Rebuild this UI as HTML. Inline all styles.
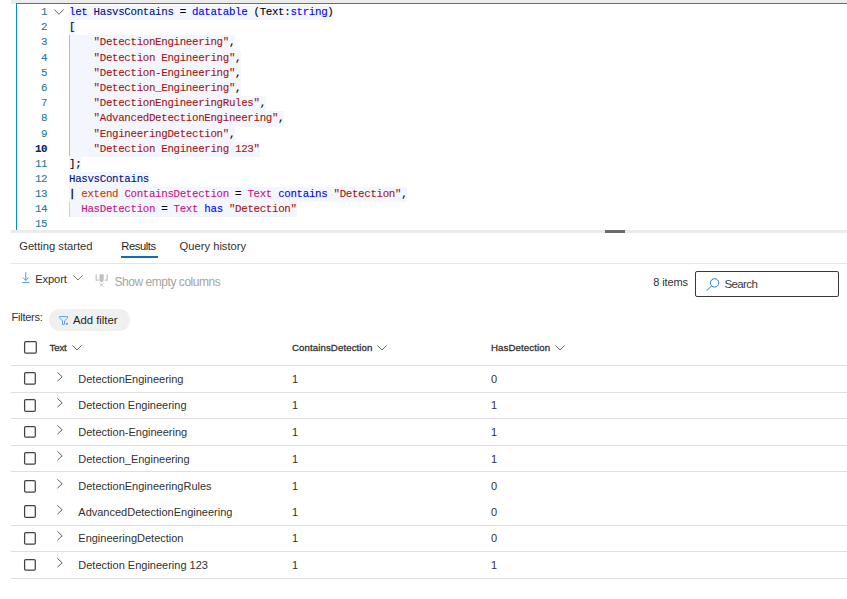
<!DOCTYPE html>
<html lang="en">
<head>
<meta charset="utf-8">
<title>Query results</title>
<style>
html,body{margin:0;padding:0;background:#fff;}
body{width:847px;height:599px;position:relative;overflow:hidden;font-family:"Liberation Sans",sans-serif;color:#323130;}
.abs{position:absolute;}
#topstrip{left:11px;top:0;width:836px;height:3.5px;background:#ececec;}
#edtop{left:16px;top:3px;width:831px;height:1.2px;background:#0986e8;}
#edleft{left:16px;top:3px;width:1.2px;height:227px;background:#0986e8;}
#splitter{left:11px;top:230px;width:836px;height:3px;background:#edebe9;}
#handle{left:605px;top:230px;width:20px;height:3px;background:#6b6a68;}
.ln{position:absolute;left:0;width:47.2px;text-align:right;font-family:"Liberation Mono",monospace;font-size:10.8px;letter-spacing:-0.33px;color:#237893;height:15.15px;line-height:15.15px;white-space:pre;-webkit-text-stroke:0.1px;}
.ln.cur{color:#0b216f;font-weight:bold;}
.cl{position:absolute;left:69px;font-family:"Liberation Mono",monospace;font-size:10.8px;letter-spacing:-0.33px;color:#000;height:15.15px;line-height:15.15px;white-space:pre;-webkit-text-stroke:0.1px;}
.cl span.h{background:#f3f7fd;display:inline-block;height:15.15px;}
.k{color:#0000ff;}
.s{color:#a31515;}
.c{color:#c71585;}
.q{color:#ce3600;}
.v{color:#001188;}
#guide1{left:69px;top:35px;width:1px;height:121px;background:#b9b9b9;}
#guide2{left:69px;top:201.6px;width:1px;height:15px;background:#d3d3d3;}
.tab{position:absolute;top:239px;font-size:11.2px;line-height:14px;color:#323130;white-space:nowrap;}
#tabline{left:121px;top:256.3px;width:36.8px;height:1.8px;background:#0f6cbd;}
#sep{left:11px;top:263px;width:836px;height:1px;background:#e6e6e6;}
.t{position:absolute;white-space:nowrap;line-height:14px;}
#pill{left:49px;top:309px;width:81px;height:22px;border-radius:11px;background:#f0f0f0;}
#search{left:695px;top:271px;width:142px;height:24px;border:1px solid #3b3a39;border-radius:2px;background:#fff;}
.row{position:absolute;left:11px;width:836px;height:1px;background:#e1dfdd;}
.cb{position:absolute;left:24px;width:10.4px;height:10.4px;border:1.2px solid #3b3a39;border-radius:2px;background:#fff;}
.cell{position:absolute;font-size:11px;line-height:14px;color:#323130;white-space:nowrap;}
.hd{position:absolute;font-size:9.7px;line-height:14px;color:#323130;white-space:nowrap;-webkit-text-stroke:0.28px #323130;letter-spacing:0.08px;}
svg{position:absolute;overflow:visible;}
.p{-webkit-text-stroke:0.35px #000;}

</style>
</head>
<body>
<div class="abs" id="topstrip"></div>
<div class="abs" id="edtop"></div>
<div class="abs" id="edleft"></div>
<div class="ln" style="top:4.70px">1</div>
<div class="cl" style="top:4.70px"><span class="h" style="height:15px"><span class="k">let</span> <span class="v">HasvsContains</span> = <span class="k">datatable</span> (Text:<span class="k">string</span>)</span></div>
<div class="ln" style="top:19.70px">2</div>
<div class="cl" style="top:19.70px"><span class="h" style="height:15px">[</span></div>
<div class="ln" style="top:34.70px">3</div>
<div class="cl" style="top:34.70px"><span class="h" style="height:16px">    <span class="s">&quot;DetectionEngineering&quot;</span>,</span></div>
<div class="ln" style="top:50.70px">4</div>
<div class="cl" style="top:50.70px"><span class="h" style="height:15px">    <span class="s">&quot;Detection Engineering&quot;</span>,</span></div>
<div class="ln" style="top:65.70px">5</div>
<div class="cl" style="top:65.70px"><span class="h" style="height:15px">    <span class="s">&quot;Detection-Engineering&quot;</span>,</span></div>
<div class="ln" style="top:80.70px">6</div>
<div class="cl" style="top:80.70px"><span class="h" style="height:15px">    <span class="s">&quot;Detection_Engineering&quot;</span>,</span></div>
<div class="ln" style="top:95.70px">7</div>
<div class="cl" style="top:95.70px"><span class="h" style="height:15px">    <span class="s">&quot;DetectionEngineeringRules&quot;</span>,</span></div>
<div class="ln" style="top:110.70px">8</div>
<div class="cl" style="top:110.70px"><span class="h" style="height:16px">    <span class="s">&quot;AdvancedDetectionEngineering&quot;</span>,</span></div>
<div class="ln" style="top:126.70px">9</div>
<div class="cl" style="top:126.70px"><span class="h" style="height:15px">    <span class="s">&quot;EngineeringDetection&quot;</span>,</span></div>
<div class="ln cur" style="top:141.70px">10</div>
<div class="cl" style="top:141.70px"><span class="h" style="height:15px">    <span class="s">&quot;Detection Engineering 123&quot;</span></span></div>
<div class="ln" style="top:156.70px">11</div>
<div class="cl" style="top:156.70px"><span class="h" style="height:15px">];</span></div>
<div class="ln" style="top:171.70px">12</div>
<div class="cl" style="top:171.70px"><span class="h" style="height:15px"><span class="v">HasvsContains</span></span></div>
<div class="ln" style="top:186.70px">13</div>
<div class="cl" style="top:186.70px"><span class="h" style="height:15px"><span class="p">|</span> <span class="q">extend</span> <span class="c">ContainsDetection</span> = <span class="c">Text</span> <span class="k">contains</span> <span class="s">&quot;Detection&quot;</span>,</span></div>
<div class="ln" style="top:201.70px">14</div>
<div class="cl" style="top:201.70px"><span class="h" style="height:15px">  <span class="c">HasDetection</span> = <span class="c">Text</span> <span class="k">has</span> <span class="s">&quot;Detection&quot;</span></span></div>
<div class="ln" style="top:216.70px">15</div>
<div class="abs" id="guide1"></div>
<div class="abs" id="guide2"></div>
<div class="abs" id="splitter"></div>
<div class="abs" id="handle"></div>
<svg id="fold" style="left:54.2px;top:8.8px" width="10" height="6" viewBox="0 0 10 6"><path d="M0.4 0.5 L5 5.3 L9.6 0.5" fill="none" stroke="#5a5a5a" stroke-width="0.95"/></svg>
<div class="t" id="tab1" style="left:19.2px;top:239px;font-size:11.2px">Getting started</div>
<div class="t" id="tab2" style="left:121.3px;top:239px;font-size:11.2px;letter-spacing:-0.42px;color:#201f1e">Results</div>
<div class="t" id="tab3" style="left:179.6px;top:239px;font-size:11.2px">Query history</div>
<div class="abs" id="tabline"></div>
<div class="abs" id="sep"></div>
<svg id="exp" style="left:22px;top:272px" width="8" height="12" viewBox="0 0 8 12"><path d="M3.75 0.2 V8.4 M1 5.6 L3.75 8.5 L6.5 5.6 M0.2 10.5 H7.3" fill="none" stroke="#3a8ee0" stroke-width="0.9"/></svg>
<div class="t" id="export" style="left:35.2px;top:272px;font-size:11.2px;letter-spacing:-0.13px">Export</div>
<svg id="expchev" style="left:73.3px;top:275.2px" width="10" height="6" viewBox="0 0 10 6"><path d="M0.4 0.4 L5 5 L9.6 0.4" fill="none" stroke="#605e5c" stroke-width="0.85"/></svg>
<svg id="colicon" style="left:95.2px;top:274px" width="13" height="13" viewBox="0 0 13 13"><path d="M1.2 0.2 V6.1 H3.8 M12.2 0.2 V6.1 H9.8" fill="none" stroke="#c6c4c2" stroke-width="1.2"/><path d="M4.5 0.2 H8.65 V7 L6.57 8.4 L4.5 7 Z" fill="#bfbfbf"/><path d="M4.6 9.3 L8.6 12.6 M8.6 9.3 L4.6 12.6" fill="none" stroke="#c0bebc" stroke-width="0.9"/></svg>
<div class="t" id="showempty" style="left:114.5px;top:275px;font-size:12px;letter-spacing:-0.455px;color:#a6a4a2">Show empty columns</div>
<div class="t" id="items" style="left:653.2px;top:275px;font-size:11px;letter-spacing:-0.1px">8 items</div>
<div class="abs" id="search"></div>
<svg id="sicon" style="left:706px;top:278px" width="14" height="13" viewBox="0 0 14 13"><circle cx="8.6" cy="4.9" r="4.2" fill="none" stroke="#2b7fd6" stroke-width="1"/><path d="M5.6 8 L0.5 12.7" fill="none" stroke="#2b7fd6" stroke-width="1"/></svg>
<div class="t" id="searchtxt" style="left:724.5px;top:277px;font-size:11.5px;letter-spacing:-0.62px;color:#3b3a39">Search</div>
<div class="t" id="filters" style="left:11.5px;top:310px;font-size:11px;letter-spacing:-0.24px">Filters:</div>
<div class="abs" id="pill"></div>
<svg id="ficon" style="left:58px;top:316px" width="11" height="9" viewBox="0 0 11 9"><path d="M1.4 0.6 H9.5 V2.1 L6.5 4.9 V8.35 H4.5 V4.9 L1.4 1.6 Z" fill="none" stroke="#3a91de" stroke-width="0.8" stroke-linejoin="round"/><rect x="8.05" y="6.95" width="1.8" height="1.8" fill="#4a9ce2"/></svg>
<div class="t" id="addfilter" style="left:72.9px;top:313px;font-size:11.3px;color:#201f1e">Add filter</div>
<svg class="cbx" style="left:24px;top:341px" width="12.9" height="12.7" viewBox="0 0 12.9 12.7"><rect x="0.6" y="0.6" width="11.70" height="11.50" rx="1.15" ry="1.15" fill="#fff" stroke="#444240" stroke-width="1.25"/></svg>
<div class="hd" id="h1" style="left:49.5px;top:341px;letter-spacing:-0.15px">Text</div>
<div class="hd" id="h2" style="left:292px;top:341px">ContainsDetection</div>
<div class="hd" id="h3" style="left:491px;top:341px">HasDetection</div>
<svg id="hc1" style="left:72.3px;top:344.5px" width="10" height="6" viewBox="0 0 10 6"><path d="M0.4 0.4 L5 5 L9.6 0.4" fill="none" stroke="#605e5c" stroke-width="0.95"/></svg>
<svg id="hc2" style="left:377px;top:344.5px" width="10" height="6" viewBox="0 0 10 6"><path d="M0.4 0.4 L5 5 L9.6 0.4" fill="none" stroke="#605e5c" stroke-width="0.95"/></svg>
<svg id="hc3" style="left:554.5px;top:344.5px" width="10" height="6" viewBox="0 0 10 6"><path d="M0.4 0.4 L5 5 L9.6 0.4" fill="none" stroke="#605e5c" stroke-width="0.95"/></svg>
<div class="row" style="top:365px"></div>
<div class="row" style="top:392px"></div>
<div class="row" style="top:418.3px"></div>
<div class="row" style="top:445px"></div>
<div class="row" style="top:471.4px"></div>
<div class="row" style="top:525px"></div>
<div class="row" style="top:551px"></div>
<div class="row" style="top:578.2px"></div>
<svg class="cbx" style="left:24px;top:372px" width="11.9" height="12.8" viewBox="0 0 11.9 12.8"><rect x="0.6" y="0.6" width="10.70" height="11.60" rx="1.15" ry="1.15" fill="#fff" stroke="#444240" stroke-width="1.25"/></svg>
<svg class="rc" style="left:56.5px;top:372.2px" width="6" height="10" viewBox="0 0 6 10"><path d="M0.4 0.4 L5.2 4.8 L0.4 9.2" fill="none" stroke="#605e5c" stroke-width="1"/></svg>
<div class="cell" id="r0a" style="left:78.3px;top:371.5px">DetectionEngineering</div>
<div class="cell" id="r0b" style="left:292px;top:371.5px">1</div>
<div class="cell" id="r0c" style="left:491px;top:371.5px">0</div>
<svg class="cbx" style="left:24px;top:399px" width="11.9" height="12.9" viewBox="0 0 11.9 12.9"><rect x="0.6" y="0.6" width="10.70" height="11.70" rx="1.15" ry="1.15" fill="#fff" stroke="#444240" stroke-width="1.25"/></svg>
<svg class="rc" style="left:56.5px;top:398.2px" width="6" height="10" viewBox="0 0 6 10"><path d="M0.4 0.4 L5.2 4.8 L0.4 9.2" fill="none" stroke="#605e5c" stroke-width="1"/></svg>
<div class="cell" id="r1a" style="left:78.3px;top:397.5px">Detection Engineering</div>
<div class="cell" id="r1b" style="left:292px;top:397.5px">1</div>
<div class="cell" id="r1c" style="left:491px;top:397.5px">1</div>
<svg class="cbx" style="left:24px;top:426px" width="11.9" height="11.8" viewBox="0 0 11.9 11.8"><rect x="0.6" y="0.6" width="10.70" height="10.60" rx="1.15" ry="1.15" fill="#fff" stroke="#444240" stroke-width="1.25"/></svg>
<svg class="rc" style="left:56.5px;top:425.2px" width="6" height="10" viewBox="0 0 6 10"><path d="M0.4 0.4 L5.2 4.8 L0.4 9.2" fill="none" stroke="#605e5c" stroke-width="1"/></svg>
<div class="cell" id="r2a" style="left:78.3px;top:424.5px">Detection-Engineering</div>
<div class="cell" id="r2b" style="left:292px;top:424.5px">1</div>
<div class="cell" id="r2c" style="left:491px;top:424.5px">1</div>
<svg class="cbx" style="left:24px;top:452px" width="11.9" height="12.8" viewBox="0 0 11.9 12.8"><rect x="0.6" y="0.6" width="10.70" height="11.60" rx="1.15" ry="1.15" fill="#fff" stroke="#444240" stroke-width="1.25"/></svg>
<svg class="rc" style="left:56.5px;top:451.2px" width="6" height="10" viewBox="0 0 6 10"><path d="M0.4 0.4 L5.2 4.8 L0.4 9.2" fill="none" stroke="#605e5c" stroke-width="1"/></svg>
<div class="cell" id="r3a" style="left:78.3px;top:451.5px">Detection_Engineering</div>
<div class="cell" id="r3b" style="left:292px;top:451.5px">1</div>
<div class="cell" id="r3c" style="left:491px;top:451.5px">1</div>
<svg class="cbx" style="left:24px;top:480px" width="11.9" height="12.8" viewBox="0 0 11.9 12.8"><rect x="0.6" y="0.6" width="10.70" height="11.60" rx="1.15" ry="1.15" fill="#fff" stroke="#444240" stroke-width="1.25"/></svg>
<svg class="rc" style="left:56.5px;top:479.2px" width="6" height="10" viewBox="0 0 6 10"><path d="M0.4 0.4 L5.2 4.8 L0.4 9.2" fill="none" stroke="#605e5c" stroke-width="1"/></svg>
<div class="cell" id="r4a" style="left:78.3px;top:478.5px">DetectionEngineeringRules</div>
<div class="cell" id="r4b" style="left:292px;top:478.5px">1</div>
<div class="cell" id="r4c" style="left:491px;top:478.5px">0</div>
<svg class="cbx" style="left:24px;top:505px" width="11.9" height="12.9" viewBox="0 0 11.9 12.9"><rect x="0.6" y="0.6" width="10.70" height="11.70" rx="1.15" ry="1.15" fill="#fff" stroke="#444240" stroke-width="1.25"/></svg>
<svg class="rc" style="left:56.5px;top:505px" width="6" height="10" viewBox="0 0 6 10"><path d="M0.4 0.4 L5.2 4.8 L0.4 9.2" fill="none" stroke="#605e5c" stroke-width="1"/></svg>
<div class="cell" id="r5a" style="left:78.3px;top:504.5px">AdvancedDetectionEngineering</div>
<div class="cell" id="r5b" style="left:292px;top:504.5px">1</div>
<div class="cell" id="r5c" style="left:491px;top:504.5px">0</div>
<svg class="cbx" style="left:24px;top:532px" width="11.9" height="12.8" viewBox="0 0 11.9 12.8"><rect x="0.6" y="0.6" width="10.70" height="11.60" rx="1.15" ry="1.15" fill="#fff" stroke="#444240" stroke-width="1.25"/></svg>
<svg class="rc" style="left:56.5px;top:531.2px" width="6" height="10" viewBox="0 0 6 10"><path d="M0.4 0.4 L5.2 4.8 L0.4 9.2" fill="none" stroke="#605e5c" stroke-width="1"/></svg>
<div class="cell" id="r6a" style="left:78.3px;top:530.5px">EngineeringDetection</div>
<div class="cell" id="r6b" style="left:292px;top:530.5px">1</div>
<div class="cell" id="r6c" style="left:491px;top:530.5px">0</div>
<svg class="cbx" style="left:24px;top:559px" width="11.9" height="11.8" viewBox="0 0 11.9 11.8"><rect x="0.6" y="0.6" width="10.70" height="10.60" rx="1.15" ry="1.15" fill="#fff" stroke="#444240" stroke-width="1.25"/></svg>
<svg class="rc" style="left:56.5px;top:558.2px" width="6" height="10" viewBox="0 0 6 10"><path d="M0.4 0.4 L5.2 4.8 L0.4 9.2" fill="none" stroke="#605e5c" stroke-width="1"/></svg>
<div class="cell" id="r7a" style="left:78.3px;top:557.5px">Detection Engineering 123</div>
<div class="cell" id="r7b" style="left:292px;top:557.5px">1</div>
<div class="cell" id="r7c" style="left:491px;top:557.5px">1</div>
</body>
</html>
